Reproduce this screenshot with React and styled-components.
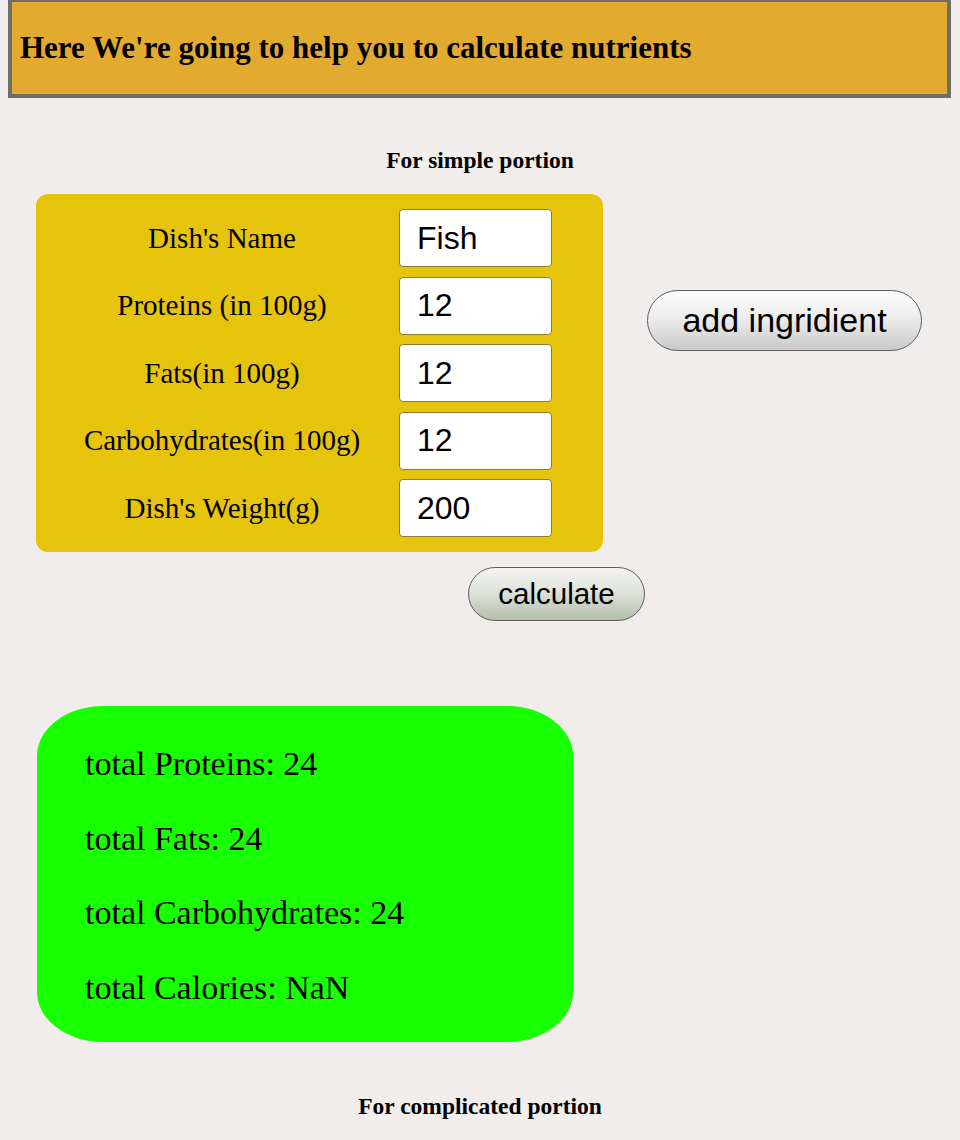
import styled, { createGlobalStyle } from "styled-components";

const GlobalStyle = createGlobalStyle`
    body {
        margin: 0;
        background: #f0edec;
        font-family: "Liberation Serif", "Times New Roman", serif;
        color: #000;
    }
`;

const fields = [
    { label: "Dish's Name", value: "Fish" },
    { label: "Proteins (in 100g)", value: "12" },
    { label: "Fats(in 100g)", value: "12" },
    { label: "Carbohydrates(in 100g)", value: "12" },
    { label: "Dish's Weight(g)", value: "200" },
];

const totals = [
    ["total Proteins", "24"],
    ["total Fats", "24"],
    ["total Carbohydrates", "24"],
    ["total Calories", "NaN"],
];

const App = () => {
    return <Page>
        <GlobalStyle/>
        <Header>
            <Title>Here We're going to help you to calculate nutrients</Title>
        </Header>
        <Subtitle>For simple portion</Subtitle>
        <FormRow>
            <FormPanel>
                {fields.map((f) => (
                    <Field key={f.label}>
                        <Label>{f.label}</Label>
                        <Input defaultValue={f.value}/>
                    </Field>
                ))}
            </FormPanel>
            <AddButton>add ingridient</AddButton>
        </FormRow>
        <CalcButton>calculate</CalcButton>
        <Results>
            {totals.map(([name, val]) => (
                <Total key={name}>{name}: {val}</Total>
            ))}
        </Results>
        <Subtitle $bottom>For complicated portion</Subtitle>
    </Page>;
};

const Page = styled.div`
    width: 960px;
    height: 1140px;
    overflow: hidden;
    display: flex;
    flex-direction: column;
`;

const Header = styled.header`
    margin: -2px 9px 0 8px;
    height: 92px;
    border: 4px solid #6f6d6a;
    background: #e3aa30;
    display: flex;
    align-items: center;
    padding: 0 8px;
`;

const Title = styled.h1`
    margin: 0;
    font-size: 31px;
    font-weight: bold;
    white-space: nowrap;
`;

const Subtitle = styled.h3`
    margin: ${(p) => (p.$bottom ? "52px 0 0" : "50px 0 0")};
    text-align: center;
    font-size: 23.5px;
    line-height: 24px;
    font-weight: bold;
`;

const FormRow = styled.div`
    display: flex;
    align-items: flex-start;
    gap: 44px;
    margin: 22px 0 0 36px;
`;

const FormPanel = styled.div`
    width: 567px;
    box-sizing: border-box;
    padding: 15px 51px 15px 9px;
    background: #e6c40c;
    border-radius: 12px;
    display: grid;
    row-gap: 9.5px;
`;

const Field = styled.div`
    display: grid;
    grid-template-columns: 354px 153px;
    align-items: center;
`;

const Label = styled.label`
    text-align: center;
    font-size: 29px;
`;

const Input = styled.input`
    box-sizing: border-box;
    width: 153px;
    height: 58px;
    padding: 0 0 0 17px;
    border: 1px solid #8b7b35;
    border-radius: 4px;
    background: #fff;
    font-family: "Liberation Sans", Arial, sans-serif;
    font-size: 32px;
    color: #000;
    outline: none;
`;

const PillButton = styled.button`
    box-sizing: border-box;
    border: 1px solid #5e5e5e;
    border-radius: 999px;
    font-family: "Liberation Sans", Arial, sans-serif;
    color: #000;
    padding: 0;
`;

const AddButton = styled(PillButton)`
    width: 275px;
    height: 61px;
    margin-top: 96px;
    font-size: 34px;
    background: linear-gradient(#fbfbfb 0%, #ededed 45%, #c9c9c9 100%);
`;

const CalcButton = styled(PillButton)`
    width: 177px;
    height: 54px;
    margin: 15px 0 0 468px;
    font-size: 29.5px;
    background: linear-gradient(#f4f4f2 0%, #dfe3dc 45%, #b3bfab 100%);
`;

const Results = styled.div`
    width: 536px;
    height: 336px;
    box-sizing: border-box;
    margin: 85px 0 0 37px;
    padding: 39px 0 0 48px;
    background: #17ff00;
    border-radius: 66px / 50px;
    display: flex;
    flex-direction: column;
    gap: 37.5px;
`;

const Total = styled.p`
    margin: 0;
    font-size: 34px;
    line-height: 37px;
`;

export default App;
